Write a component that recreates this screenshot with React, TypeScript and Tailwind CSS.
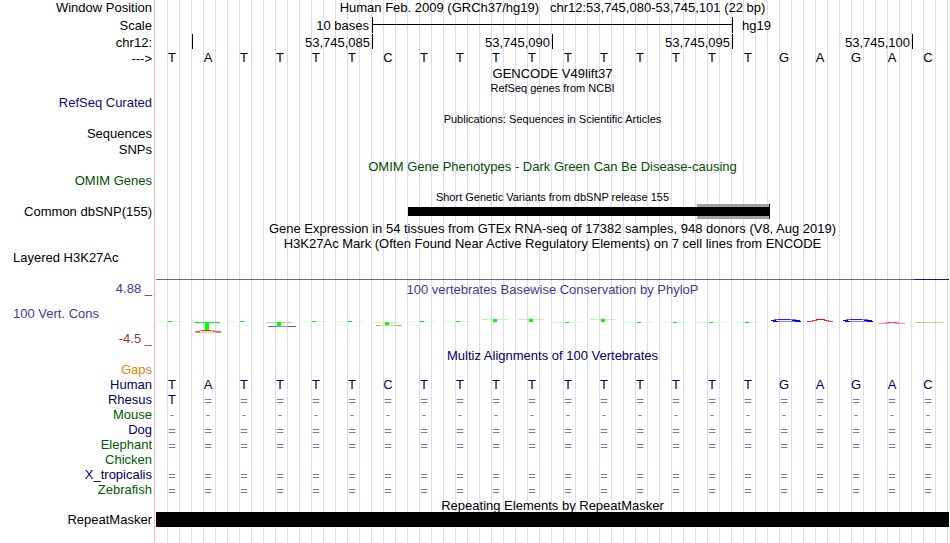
import type { ReactNode } from "react";
import clsx from "clsx";

const SEQUENCE = "TATTTTCTTTTTTTTTTGAGAC".split("");

type Species = { name: string; color: string; bases: string[] };

const fill = (char: string) => SEQUENCE.map(() => char);

const SPECIES: Species[] = [
  { name: "Human", color: "text-[#000064]", bases: SEQUENCE },
  { name: "Rhesus", color: "text-[#000064]", bases: ["T", ...fill("=").slice(1)] },
  { name: "Mouse", color: "text-[#005a00]", bases: fill("-") },
  { name: "Dog", color: "text-[#000064]", bases: fill("=") },
  { name: "Elephant", color: "text-[#005a00]", bases: fill("=") },
  { name: "Chicken", color: "text-[#005a00]", bases: [] },
  { name: "X_tropicalis", color: "text-[#000064]", bases: fill("=") },
  { name: "Zebrafish", color: "text-[#005a00]", bases: fill("=") },
];

// One entry per base, in the order of SEQUENCE
const LOGOS = [
  "flat", "tallT", "flat", "blueT", "flat", "flat", "tanT", "flat", "flat",
  "up", "up", "low", "up", "low", "low", "low", "low",
  "G", "A", "G", "negA", "negC",
];

const POSITIONS = ["53,745,085", "53,745,090", "53,745,095", "53,745,100"];

function Row({
  label,
  labelClass,
  height = "h-4",
  flush,
  children,
}: {
  label?: string;
  labelClass?: string;
  height?: string;
  flush?: boolean;
  children?: ReactNode;
}) {
  return (
    <div className={clsx("flex items-center", height)}>
      <div
        className={clsx("w-[156px] shrink-0 pr-1 text-right", !flush && "pb-0.5", labelClass)}
      >
        {label}
      </div>
      <div className="h-full min-w-0 flex-1">{children}</div>
    </div>
  );
}

function Title({ className, children }: { className?: string; children: ReactNode }) {
  return (
    <h2 className={clsx("flex h-full items-center justify-center pr-px", className)}>
      {children}
    </h2>
  );
}

function Bases({ bases, className }: { bases: string[]; className?: string }) {
  return (
    <div
      className={clsx(
        "grid h-full grid-cols-[repeat(22,minmax(0,1fr))] items-center pr-0.5 text-center",
        className,
      )}
    >
      {bases.map((base, i) => (
        <span
          key={i}
          className={clsx(
            "pr-1",
            base === "=" && "pt-0.5 leading-[13px]",
            (base === "=" || base === "-") && "text-[#7878aa]",
          )}
        >
          {base}
        </span>
      ))}
    </div>
  );
}

function Logo({ kind }: { kind: string }) {
  return (
    <svg viewBox="0 0 36 49" className="h-[49px] w-9" shapeRendering="crispEdges">
      {kind === "flat" && (
        <>
          <path d="M1 22h26v1H1z" fill="#dcf8dc" />
          <path d="M12 22h4v1h-4z" fill="#00f000" />
        </>
      )}
      {kind === "low" && (
        <>
          <path d="M2 23h26v1H2z" fill="#dcf8dc" />
          <path d="M13 23h4v1h-4z" fill="#00f000" />
        </>
      )}
      {kind === "up" && (
        <>
          <path d="M2 20h26v1H2z" fill="#b4fab4" />
          <path d="M13 20h4v3h-4z" fill="#00ff00" />
        </>
      )}
      {kind === "tallT" && (
        <>
          <path d="M2 23h26v1H2z" fill="#00ff00" />
          <path d="M13 24h4v7h-4z" fill="#00ff00" />
          <path d="M7 31h16v1H7z" fill="#e6a090" />
          <path d="M10 31h9v1h-9z" fill="#ff2020" />
          <path d="M3 32h5v1H3zM21 32h8v1h-8z" fill="#ff5a4a" />
          <path d="M8 32h13v1H8z" fill="#e6e0b8" />
          <path d="M3 33h27v1H3z" fill="#dcd6a0" />
          <path d="M4 33h4v1H4zM24 33h5v1h-5z" fill="#b4aa50" />
        </>
      )}
      {kind === "blueT" && (
        <>
          <path d="M2 23h26v1H2z" fill="#78fa78" />
          <path d="M13 23h4v4h-4z" fill="#00ff00" />
          <path d="M4 27h28v1H4z" fill="#8c8cff" />
          <path d="M4 27h9v1H4zM24 27h8v1h-8z" fill="#5a5aff" />
        </>
      )}
      {kind === "tanT" && (
        <>
          <path d="M2 23h26v1H2z" fill="#b4fab4" />
          <path d="M13 23h4v3h-4z" fill="#00ff00" />
          <path d="M4 26h26v1H4z" fill="#dcd6a0" />
          <path d="M4 26h4v1H4zM23 26h6v1h-6z" fill="#b4aa50" />
        </>
      )}
      {kind === "G" && (
        <>
          <path d="M6 20h22v1H6z" fill="#6464ff" />
          <path d="M10 20h12v1H10z" fill="#1e1eff" />
          <path d="M3 21h5v1H3zM24 21h8v1h-8z" fill="#0000ff" />
          <path d="M5 22h27v1H5z" fill="#7878ff" />
          <path d="M5 22h5v1H5zM27 22h6v1h-6z" fill="#0000ff" />
        </>
      )}
      {kind === "A" && (
        <>
          <path d="M12 20h9v1h-9z" fill="#ff0000" />
          <path d="M8 21h5v1H8zM20 21h5v1h-5z" fill="#ff2828" />
          <path d="M3 22h6v1H3zM24 22h5v1h-5z" fill="#ff3c3c" />
        </>
      )}
      {kind === "negA" && (
        <>
          <path d="M9 23h14v1H9z" fill="#ff7878" />
          <path d="M12 23h8v1h-8z" fill="#ff3c3c" />
          <path d="M3 24h10v1H3zM19 24h10v1H19z" fill="#ff8c8c" />
        </>
      )}
      {kind === "negC" && (
        <>
          <path d="M4 23h27v1H4z" fill="#d2cd91" />
          <path d="M5 23h5v1H5z" fill="#bebe50" />
        </>
      )}
    </svg>
  );
}

// Vertical base guides behind every track
function GridLines() {
  return (
    <div className="col-start-1 row-start-1 flex" aria-hidden="true">
      <div className="w-[154px] shrink-0" />
      <div className="w-0.5 shrink-0 border-l border-[#ffb4b4]" />
      <div className="mr-px flex-1 bg-[repeating-linear-gradient(to_right,transparent_0_11px,#dcdcf5_11px_12px)]" />
    </div>
  );
}

export default function App() {
  return (
    <main className="grid min-h-screen bg-white font-['Liberation_Sans',Arial,sans-serif] text-[13px] leading-[15px] text-black">
      <GridLines />
      <div className="col-start-1 row-start-1">
        <Row label="Window Position">
          <Title className="pb-0.5">
            <span className="whitespace-pre">
              {"Human Feb. 2009 (GRCh37/hg19)   chr12:53,745,080-53,745,101 (22 bp)"}
            </span>
          </Title>
        </Row>
        <Row label="Scale" height="h-[18px]" flush>
          <div className="grid h-full grid-cols-[repeat(22,minmax(0,1fr))] items-center pr-0.5">
            <span className="col-span-6 pr-[3px] text-right">10 bases</span>
            <div className="col-span-10 -mr-px flex h-4 items-center border-x border-black">
              <div className="mb-px h-px w-full bg-black" />
            </div>
            <span className="col-span-6 pl-2.5">hg19</span>
          </div>
        </Row>
        <Row label="chr12:" flush>
          <div className="grid h-full grid-cols-[repeat(22,minmax(0,1fr))] pr-0.5">
            <span />
            {POSITIONS.map((position) => (
              <span
                key={position}
                className="col-span-5 flex h-[15px] items-center justify-end border-l border-black pt-0.5 pr-0.5"
              >
                {position}
              </span>
            ))}
            <span className="h-[15px] border-l border-black" />
          </div>
        </Row>
        <Row label="--->" flush>
          <Bases bases={SEQUENCE} className="pb-1" />
        </Row>
        <Row height="h-[15px]">
          <Title>GENCODE V49lift37</Title>
        </Row>
        <Row height="h-[15px]">
          <Title className="text-[11px]">RefSeq genes from NCBI</Title>
        </Row>
        <Row label="RefSeq Curated" labelClass="text-[#0c0c78]" height="h-[15px]" />
        <Row>
          <Title className="text-[11px]">Publications: Sequences in Scientific Articles</Title>
        </Row>
        <Row label="Sequences" height="h-[15px]" />
        <Row label="SNPs" />
        <Row>
          <Title className="text-[#005000]">
            OMIM Gene Phenotypes - Dark Green Can Be Disease-causing
          </Title>
        </Row>
        <Row label="OMIM Genes" labelClass="text-[#005000]" height="h-[15px]" />
        <Row height="h-[15px]">
          <Title className="pt-0.5 text-[11px]">
            Short Genetic Variants from dbSNP release 155
          </Title>
        </Row>
        <Row label="Common dbSNP(155)">
          <div className="grid h-[15px] grid-cols-[repeat(22,minmax(0,1fr))] items-center pr-0.5">
            <div className="col-span-8 col-start-8 row-start-1 -mr-px h-[9px] bg-black" />
            <div className="col-span-2 col-start-16 row-start-1 -mr-0.5 ml-px flex h-[15px] items-center border-r border-black bg-[#a0a0a0]">
              <div className="h-[9px] w-full bg-black" />
            </div>
          </div>
        </Row>
        <Row>
          <Title>
            Gene Expression in 54 tissues from GTEx RNA-seq of 17382 samples, 948 donors (V8, Aug 2019)
          </Title>
        </Row>
        <Row height="h-[15px]">
          <Title>
            H3K27Ac Mark (Often Found Near Active Regulatory Elements) on 7 cell lines from ENCODE
          </Title>
        </Row>
        <div className="flex h-[29px]">
          <div className="w-[156px] shrink-0 pl-[13px] leading-[13px]">Layered H3K27Ac</div>
          <div className="grid flex-1 grid-cols-[repeat(22,minmax(0,1fr))] items-end">
            <div className="col-span-21 h-px bg-[#78646e]" />
            <div className="mr-px h-px bg-[#1e1478]" />
          </div>
        </div>

        <div className="flex h-[68px] text-[#3c3c8c]">
          <div className="flex w-[156px] shrink-0 flex-col justify-between pr-1 pl-[13px] leading-[18px]">
            <span className="text-right">4.88 _</span>
            <span>100 Vert. Cons</span>
            <span className="text-right text-[#8c3c3c]">-4.5 _</span>
          </div>
          <div className="min-w-0 flex-1">
            <h2 className="pr-px text-center leading-[19px]">
              100 vertebrates Basewise Conservation by PhyloP
            </h2>
            <div className="grid grid-cols-[repeat(22,minmax(0,1fr))] pr-0.5">
              {LOGOS.map((kind, i) => (
                <Logo key={i} kind={kind} />
              ))}
            </div>
          </div>
        </div>

        <Row height="h-[15px]">
          <Title className="text-[#000064]">Multiz Alignments of 100 Vertebrates</Title>
        </Row>
        <Row label="Gaps" labelClass="text-[#e6820a]" height="h-3.5" />
        {SPECIES.map(({ name, color, bases }) => (
          <Row key={name} label={name} labelClass={color} height="h-[15px]" flush>
            <Bases bases={bases} className="text-[#000064]" />
          </Row>
        ))}
        <Row height="h-[15px]">
          <Title className="pt-0.5">Repeating Elements by RepeatMasker</Title>
        </Row>
        <Row label="RepeatMasker" height="h-[15px]" flush>
          <div className="mr-px h-full bg-black" />
        </Row>
      </div>
    </main>
  );
}
